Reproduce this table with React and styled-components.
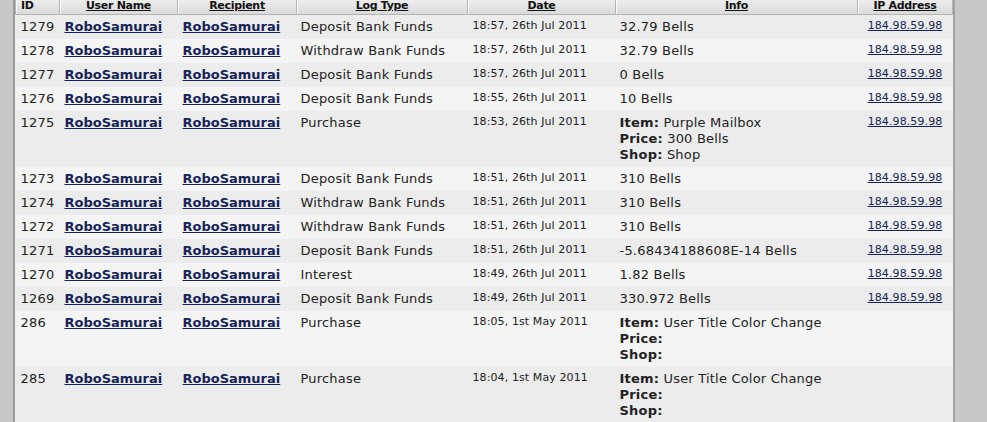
import React from 'react';
import styled, { createGlobalStyle } from 'styled-components';

const GlobalStyle = createGlobalStyle`
  html, body {
    margin: 0;
    padding: 0;
    background: #c8c8c8;
  }
  body {
    font-family: "DejaVu Sans", Verdana, sans-serif;
    color: #222;
  }
`;

const Page = styled.div`
  display: flex;
  height: 422px;
  overflow: hidden;
`;

const Panel = styled.div`
  margin-left: 13px;
  width: 937px;
  border-left: 2px solid #9a9a9a;
  border-right: 3px solid #a2a2a2;
  background: #f0f0f0;
`;

const Table = styled.table`
  width: 937px;
  border-collapse: collapse;
  table-layout: fixed;
`;

const Th = styled.th`
  height: 14px;
  padding: 0 5px;
  font-size: 11px;
  line-height: 11px;
  font-weight: bold;
  letter-spacing: -0.3px;
  text-decoration: ${({ plain }) => (plain ? 'none' : 'underline')};
  vertical-align: top;
  text-align: ${({ align }) => align || 'center'};
  color: #111;
  background: linear-gradient(#ededed, #dadada);
  border: 1px solid #b4b4b4;
  border-top: none;
  box-shadow: inset 1px 0 0 #fafafa;
`;

const Row = styled.tr`
  background: ${({ shade }) => (shade ? '#ececec' : '#f4f4f4')};
`;

const Td = styled.td`
  padding: 4px 5px 4px ${({ pl }) => pl || 5}px;
  font-size: 13px;
  line-height: 16px;
  vertical-align: top;
  text-align: ${({ align }) => align || 'left'};
  white-space: nowrap;
  letter-spacing: 0.2px;
`;

const SmallTd = styled(Td)`
  font-size: 11px;
  line-height: 13px;
  letter-spacing: 0.1px;
`;

const UserLink = styled.a`
  color: #142457;
  font-weight: bold;
  letter-spacing: 0;
  text-decoration: underline;
`;

const IpLink = styled.a`
  color: #142457;
  text-decoration: underline;
`;

const Label = styled.b`
  font-weight: bold;
`;

const InfoLine = styled.div``;

const ip = '184.98.59.98';

const logs = [
  { id: 1279, type: 'Deposit Bank Funds', date: '18:57, 26th Jul 2011', info: '32.79 Bells', ip },
  { id: 1278, type: 'Withdraw Bank Funds', date: '18:57, 26th Jul 2011', info: '32.79 Bells', ip },
  { id: 1277, type: 'Deposit Bank Funds', date: '18:57, 26th Jul 2011', info: '0 Bells', ip },
  { id: 1276, type: 'Deposit Bank Funds', date: '18:55, 26th Jul 2011', info: '10 Bells', ip },
  { id: 1275, type: 'Purchase', date: '18:53, 26th Jul 2011', item: ['Purple Mailbox', '300 Bells', 'Shop'], ip },
  { id: 1273, type: 'Deposit Bank Funds', date: '18:51, 26th Jul 2011', info: '310 Bells', ip },
  { id: 1274, type: 'Withdraw Bank Funds', date: '18:51, 26th Jul 2011', info: '310 Bells', ip },
  { id: 1272, type: 'Withdraw Bank Funds', date: '18:51, 26th Jul 2011', info: '310 Bells', ip },
  { id: 1271, type: 'Deposit Bank Funds', date: '18:51, 26th Jul 2011', info: '-5.68434188608E-14 Bells', ip },
  { id: 1270, type: 'Interest', date: '18:49, 26th Jul 2011', info: '1.82 Bells', ip },
  { id: 1269, type: 'Deposit Bank Funds', date: '18:49, 26th Jul 2011', info: '330.972 Bells', ip },
  { id: 286, type: 'Purchase', date: '18:05, 1st May 2011', item: ['User Title Color Change', '', ''], ip: '' },
  { id: 285, type: 'Purchase', date: '18:04, 1st May 2011', item: ['User Title Color Change', '', ''], ip: '' },
];

const Info = ({ log }) => {
  if (!log.item) return log.info;
  const [item, price, shop] = log.item;
  return (
    <>
      <InfoLine><Label>Item:</Label> {item}</InfoLine>
      <InfoLine><Label>Price:</Label> {price}</InfoLine>
      <InfoLine><Label>Shop:</Label> {shop}</InfoLine>
    </>
  );
};

const App = () => (
  <Page>
    <GlobalStyle />
    <Panel>
      <Table>
        <colgroup>
          <col style={{ width: 44 }} />
          <col style={{ width: 118 }} />
          <col style={{ width: 119 }} />
          <col style={{ width: 171 }} />
          <col style={{ width: 148 }} />
          <col style={{ width: 242 }} />
          <col style={{ width: 95 }} />
        </colgroup>
        <thead>
          <tr>
            <Th align="left" plain>ID</Th>
            <Th>User Name</Th>
            <Th>Recipient</Th>
            <Th>Log Type</Th>
            <Th>Date</Th>
            <Th>Info</Th>
            <Th>IP Address</Th>
          </tr>
        </thead>
        <tbody>
          {logs.map((log, i) => (
            <Row key={log.id} shade={i % 2 === 0}>
              <Td>{log.id}</Td>
              <Td><UserLink href="#">RoboSamurai</UserLink></Td>
              <Td><UserLink href="#">RoboSamurai</UserLink></Td>
              <Td pl={4}>{log.type}</Td>
              <SmallTd>{log.date}</SmallTd>
              <Td pl={4}><Info log={log} /></Td>
              <SmallTd align="center">{log.ip && <IpLink href="#">{log.ip}</IpLink>}</SmallTd>
            </Row>
          ))}
        </tbody>
      </Table>
    </Panel>
  </Page>
);

export default App;
